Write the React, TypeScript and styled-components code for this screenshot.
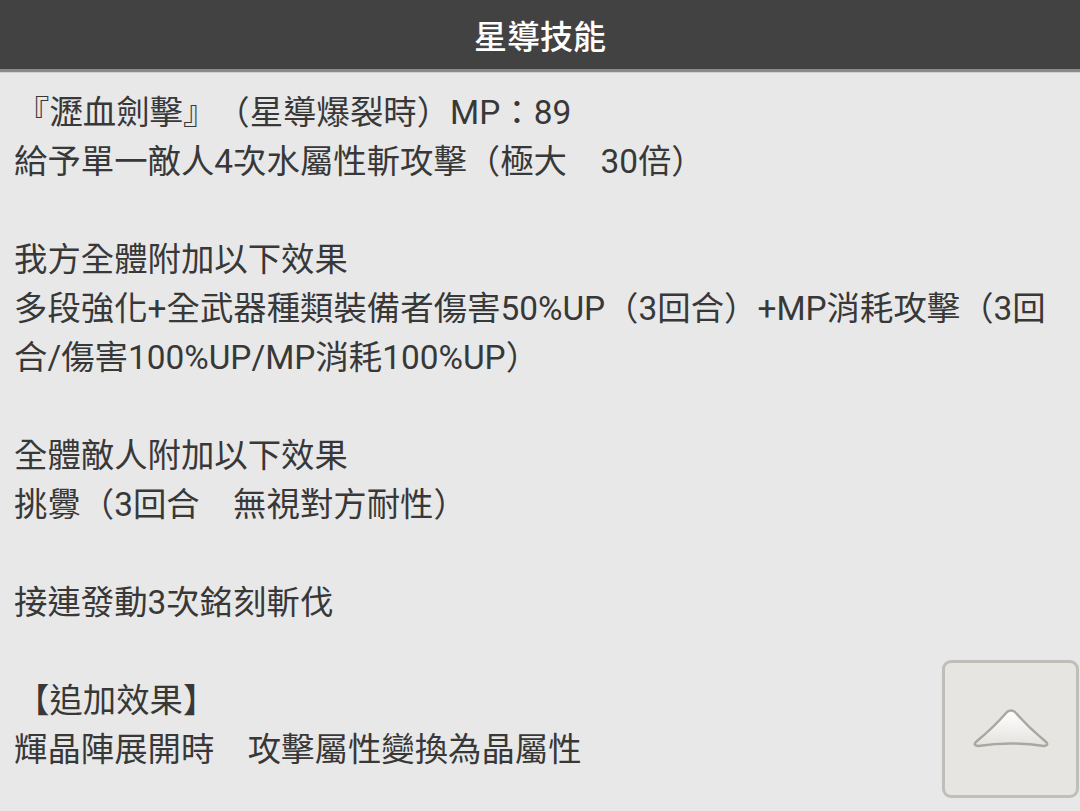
import React from "react";
import styled, { createGlobalStyle } from "styled-components";

const Global = createGlobalStyle`
  html, body { margin: 0; padding: 0; background: #e8e8e8; }
  body { font-family: Roboto, "Noto Sans CJK TC", sans-serif; }
`;

const Page = styled.div`
  position: relative;
  width: 1080px;
  height: 811px;
  overflow: hidden;
  background: #e8e8e8;
`;

const Header = styled.header`
  height: 69px;
  background: #424242;
  border-bottom: 3px solid #8a8a8a;
  box-shadow: 0 1px 0 #d0d0d0;
  display: flex;
  align-items: center;
  justify-content: center;
`;

const Title = styled.h1`
  margin: 0;
  color: #ffffff;
  font-size: 33px;
  font-weight: 500;
  font-family: "Noto Sans CJK TC", sans-serif;
`;

const Body = styled.main`
  padding: 16px 14px 0 14px;
  color: #383838;
  font-size: 33.4px;
  line-height: 49px;
  white-space: pre-wrap;
  text-spacing-trim: space-all;
  font-family: Roboto, "Noto Sans CJK TC", sans-serif;
`;

const Line = styled.div<{ $indent?: number }>`
  min-height: 49px;
  padding-left: ${(p) => p.$indent ?? 0}px;
`;

const TopButton = styled.button`
  position: absolute;
  left: 942px;
  top: 660px;
  width: 137px;
  height: 138px;
  box-sizing: border-box;
  border: 3px solid #bfbeb9;
  border-radius: 9px;
  background: #e6e5e1;
  display: flex;
  align-items: center;
  justify-content: center;
  padding: 0;
`;

const lines: { t: string; i?: number }[] = [
  { t: "『瀝血劍擊』（星導爆裂時）MP：89", i: 2 },
  { t: "給予單一敵人4次水屬性斬攻擊（極大　30倍）" },
  { t: "" },
  { t: "我方全體附加以下效果" },
  { t: "多段強化+全武器種類裝備者傷害50%UP（3回合）+MP消耗攻擊（3回合/傷害100%UP/MP消耗100%UP）" },
  { t: "" },
  { t: "全體敵人附加以下效果" },
  { t: "挑釁（3回合　無視對方耐性）" },
  { t: "" },
  { t: "接連發動3次銘刻斬伐" },
  { t: "" },
  { t: "【追加效果】", i: 2 },
  { t: "輝晶陣展開時　攻擊屬性變換為晶屬性" },
];

export default function App() {
  return (
    <Page>
      <Global />
      <Header>
        <Title>星導技能</Title>
      </Header>
      <Body>
        {lines.map((l, k) => (
          <Line key={k} $indent={l.i}>
            {l.t}
          </Line>
        ))}
      </Body>
      <TopButton aria-label="top">
        <svg width="82" height="44" viewBox="0 0 82 44">
          <defs>
            <linearGradient id="tri" x1="0" y1="0" x2="0" y2="1">
              <stop offset="0" stopColor="#ffffff" />
              <stop offset="1" stopColor="#e4e2de" />
            </linearGradient>
          </defs>
          <path
            d="M37 5 Q41 2 45 5 Q59 21 75 34 Q80 38 74 39 Q41 34 8 39 Q2 38 7 34 Q23 21 37 5 Z"
            fill="url(#tri)"
            stroke="#a9a7a1"
            strokeWidth="2.4"
            strokeLinejoin="round"
          />
        </svg>
      </TopButton>
    </Page>
  );
}
